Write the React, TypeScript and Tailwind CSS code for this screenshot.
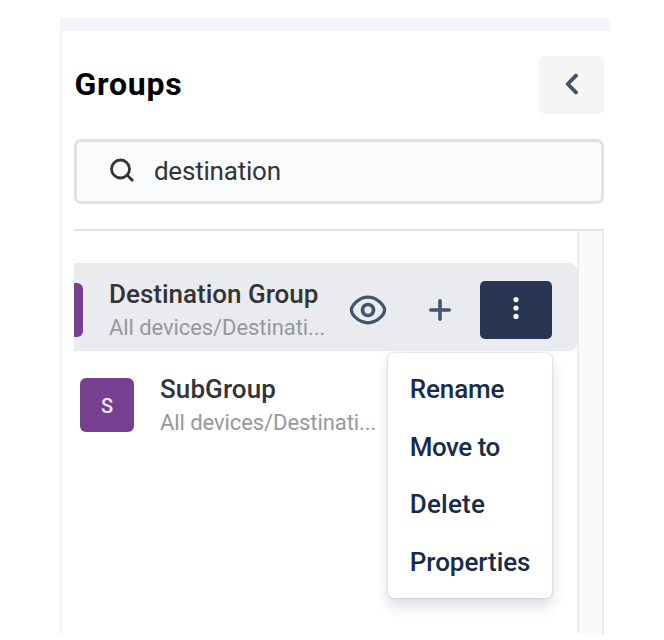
const sans = "font-[Roboto,'Liberation_Sans',sans-serif]";

function SearchIcon() {
  return (
    <svg width="24" height="24" viewBox="0 0 24 24" fill="none" stroke="#333436" strokeWidth="2.8" className="mb-[3px]">
      <circle cx="10.5" cy="11" r="9" />
      <path d="M17 17l6 6" />
    </svg>
  );
}

function EyeIcon() {
  return (
    <svg width="38" height="30" viewBox="0 0 38 30" fill="none" stroke="#44546f" strokeWidth="3.3">
      <path d="M2.4 15C2.4 10.5 9.8 2.2 19 2.2S35.6 10.5 35.6 15 28.2 27.8 19 27.8 2.4 19.5 2.4 15Z" />
      <circle cx="19" cy="15" r="5.5" strokeWidth="3.7" />
    </svg>
  );
}

function ActionMenu() {
  return (
    <div className="absolute right-0 top-[72px] z-10 flex h-[245px] w-[164px] flex-col rounded-[6px] bg-white pl-[22px] pt-[8px] shadow-[0_8px_14px_rgba(9,30,66,0.15),0_0_2px_rgba(9,30,66,0.31)]">
      <div className="flex h-[57.7px] items-center text-[26px] font-medium text-[#172b4d]"><span className="tracking-[-0.12px]">Rename</span></div>
      <div className="flex h-[57.7px] items-center text-[26px] font-medium text-[#172b4d]"><span className="tracking-[-0.5px]">Move to</span></div>
      <div className="flex h-[57.7px] items-center text-[26px] font-medium text-[#172b4d]"><span className="tracking-[0.2px]">Delete</span></div>
      <div className="flex h-[57.7px] items-center text-[26px] font-medium text-[#172b4d]"><span className="tracking-[-0.05px]">Properties</span></div>
    </div>
  );
}

export default function App() {
  return (
    <div className={`h-[640px] w-[664px] overflow-hidden bg-white pl-[60px] pt-[18px] ${sans}`}>
      <div className="flex h-[616px] w-[550px] flex-col border-l-2 border-t-[13px] border-[#f4f5fb] pl-[12.4px] pr-[5.6px]">
        <header className="mt-[25px] flex h-[58px] items-center justify-between">
          <h1 className="mb-[2px] text-[32px] font-bold tracking-[0.75px] text-black">Groups</h1>
          <button className="flex h-[58px] w-[65px] items-center justify-center rounded-[5px] bg-[#f5f5f5]">
            <svg width="14" height="22" viewBox="0 0 14 22" fill="none" stroke="#44546f" strokeWidth="3.8" strokeLinecap="round" strokeLinejoin="round" className="mb-[2px]">
              <path d="M11 2.6 2.7 11 11 19.4" />
            </svg>
          </button>
        </header>
        <div className="mt-[25px] flex h-[65px] shrink-0 items-center rounded-[7px] border-[3px] border-[#dfe1e6] bg-[#fafbfc] pl-[32.5px]">
          <SearchIcon />
          <span className="ml-[20px] text-[26px] tracking-[-0.2px] text-[#333436]">destination</span>
        </div>
        <div className="mt-[25px] flex min-h-0 grow border-t-2 border-[#e1e3e4]">
          <div className="w-[503px] pt-[32px]">
            <div className="flex h-[88px] items-center rounded-r-[8px] bg-[#eaebef]">
              <div className="mt-[5px] h-[54px] w-[9px] rounded-r-[6px] bg-[#783e90]" />
              <div className="ml-[25.6px] mt-[6px] flex w-[239.8px] flex-col">
                <span className="h-[34px] text-[26px] font-medium leading-[35px] text-[#333436]">Destination Group</span>
                <span className="h-[33px] text-[22px] leading-[34px] tracking-[-0.08px] text-[#97989c]">All devices/Destinati...</span>
              </div>
              <div className="mt-[5px] flex h-[58px] items-center">
                <EyeIcon />
                <svg className="ml-[41px]" width="24" height="24" viewBox="0 0 24 24" stroke="#44546f" strokeWidth="3.6" strokeLinecap="round">
                  <path d="M12 2.8v18.4M2.8 12h18.4" />
                </svg>
                <div className="relative ml-[28px] flex h-[58px] w-[72px] items-center justify-center rounded-[5px] bg-[#283653]">
                  <svg width="6" height="24" viewBox="0 0 6 24" fill="#f8f8fa" className="mb-[4px]">
                    <circle cx="3" cy="3.6" r="2.6" />
                    <circle cx="3" cy="12" r="2.6" />
                    <circle cx="3" cy="20.4" r="2.6" />
                  </svg>
                  <ActionMenu />
                </div>
              </div>
            </div>
            <div className="flex h-[100px] items-center pl-[5.6px]">
              <div className="mt-[8px] flex h-[54px] w-[54px] items-center justify-center rounded-[6px] bg-[#783e90] pt-[2px] text-[20px] font-medium text-[#f1ebf5]">S</div>
              <div className="ml-[26px] mt-[9px] flex flex-col">
                <span className="h-[34px] text-[26px] font-medium leading-[35px] tracking-[0.1px] text-[#333436]">SubGroup</span>
                <span className="h-[33px] text-[22px] leading-[34px] tracking-[-0.08px] text-[#97989c]">All devices/Destinati...</span>
              </div>
            </div>
          </div>
          <div className="w-[27px] border-l-2 border-r-2 border-[#ebebeb] bg-[#fafafa]" />
        </div>
      </div>
    </div>
  );
}
